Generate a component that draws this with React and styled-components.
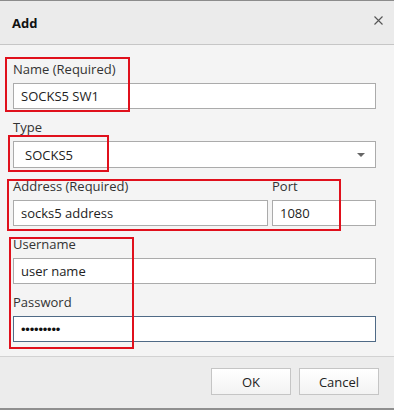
import React from "react";
import styled, { createGlobalStyle } from "styled-components";

const Global = createGlobalStyle`
  html, body { margin: 0; padding: 0; background: #f4f4f4; }
  * { box-sizing: border-box; }
`;

const Dialog = styled.div`
  position: relative;
  width: 394px;
  height: 410px;
  display: flex;
  flex-direction: column;
  background: #f4f4f4;
  border-top: 1px solid #8c8c8c;
  border-bottom: 2px solid #8f8f8f;
  font-family: "Open Sans", "Noto Sans", sans-serif;
  color: #222;
`;

const Header = styled.div`
  height: 44px;
  flex: none;
  display: flex;
  align-items: center;
  justify-content: space-between;
  padding: 1px 8px 0 12px;
  background: #ebebeb;
  border-bottom: 1px solid #c6c6c6;
`;

const Title = styled.h1`
  margin: 0;
  font-size: 13px;
  font-weight: 700;
  color: #111;
`;

const Close = styled.button`
  width: 16px;
  height: 16px;
  padding: 0;
  border: none;
  background: transparent;
  display: flex;
  align-items: center;
  justify-content: center;
  margin-top: -5px;
`;

const Body = styled.div`
  flex: 1;
  padding: 16px 18px 0 13px;
  display: flex;
  flex-direction: column;
  gap: 10px;
`;

const Field = styled.div`
  display: flex;
  flex-direction: column;
`;

const Row = styled.div`
  display: grid;
  grid-template-columns: 1fr 104px;
  gap: 4px;
`;

const Label = styled.label`
  font-size: 13px;
  line-height: 16px;
  height: 16px;
  margin-bottom: 6px;
  color: #333;
`;

const Input = styled.div`
  height: 26px;
  background: #fff;
  border: 1px solid ${(p) => (p.$focus ? "#4f6a86" : "#ababab")};
  display: flex;
  align-items: center;
  padding-left: 7px;
  font-size: 13px;
  color: #222;
`;

const Select = styled(Input)`
  height: 27px;
  padding-left: 11px;
  padding-right: 10px;
  justify-content: space-between;
`;

const Arrow = styled.span`
  width: 0;
  height: 0;
  border-left: 4px solid transparent;
  border-right: 4px solid transparent;
  border-top: 4px solid #666;
`;

const Dots = styled.span`
  font-size: 13px;
  letter-spacing: -0.2px;
  font-family: "Liberation Sans", sans-serif;
  color: #111;
`;

const Footer = styled.div`
  height: 52px;
  flex: none;
  display: flex;
  justify-content: flex-end;
  align-items: center;
  gap: 8px;
  padding: 0 15px 2px 0;
  background: #ececec;
  border-top: 1px solid #d2d2d2;
`;

const Button = styled.button`
  width: 80px;
  height: 27px;
  background: linear-gradient(#ffffff, #f3f3f3);
  border: 1px solid #c5c5c5;
  font-family: "Open Sans", "Noto Sans", sans-serif;
  font-size: 13px;
  color: #222;
  padding: 0;
`;

const Mark = styled.div`
  position: absolute;
  border: 2px solid #e0101c;
  pointer-events: none;
`;

const marks = [
  { left: 5, top: 56, width: 125, height: 55 },
  { left: 8, top: 134, width: 101, height: 37 },
  { left: 7, top: 178, width: 334, height: 52 },
  { left: 9, top: 236, width: 125, height: 112 },
];

export default function App() {
  return (
    <>
      <Global />
      <Dialog>
        <Header>
          <Title>Add</Title>
          <Close aria-label="close">
            <svg width="9" height="9" viewBox="0 0 9 9">
              <path d="M0.5 0.5 L8.5 8.5 M8.5 0.5 L0.5 8.5" stroke="#555" strokeWidth="1.1" />
            </svg>
          </Close>
        </Header>
        <Body>
          <Field>
            <Label>Name (Required)</Label>
            <Input>SOCKS5 SW1</Input>
          </Field>
          <Field>
            <Label>Type</Label>
            <Select>
              SOCKS5
              <Arrow />
            </Select>
          </Field>
          <Row>
            <Field>
              <Label>Address (Required)</Label>
              <Input>socks5 address</Input>
            </Field>
            <Field>
              <Label>Port</Label>
              <Input>1080</Input>
            </Field>
          </Row>
          <Field>
            <Label>Username</Label>
            <Input>user name</Input>
          </Field>
          <Field>
            <Label>Password</Label>
            <Input $focus>
              <Dots>•••••••••</Dots>
            </Input>
          </Field>
        </Body>
        <Footer>
          <Button>OK</Button>
          <Button>Cancel</Button>
        </Footer>
        {marks.map((m, i) => (
          <Mark key={i} style={m} />
        ))}
      </Dialog>
    </>
  );
}
